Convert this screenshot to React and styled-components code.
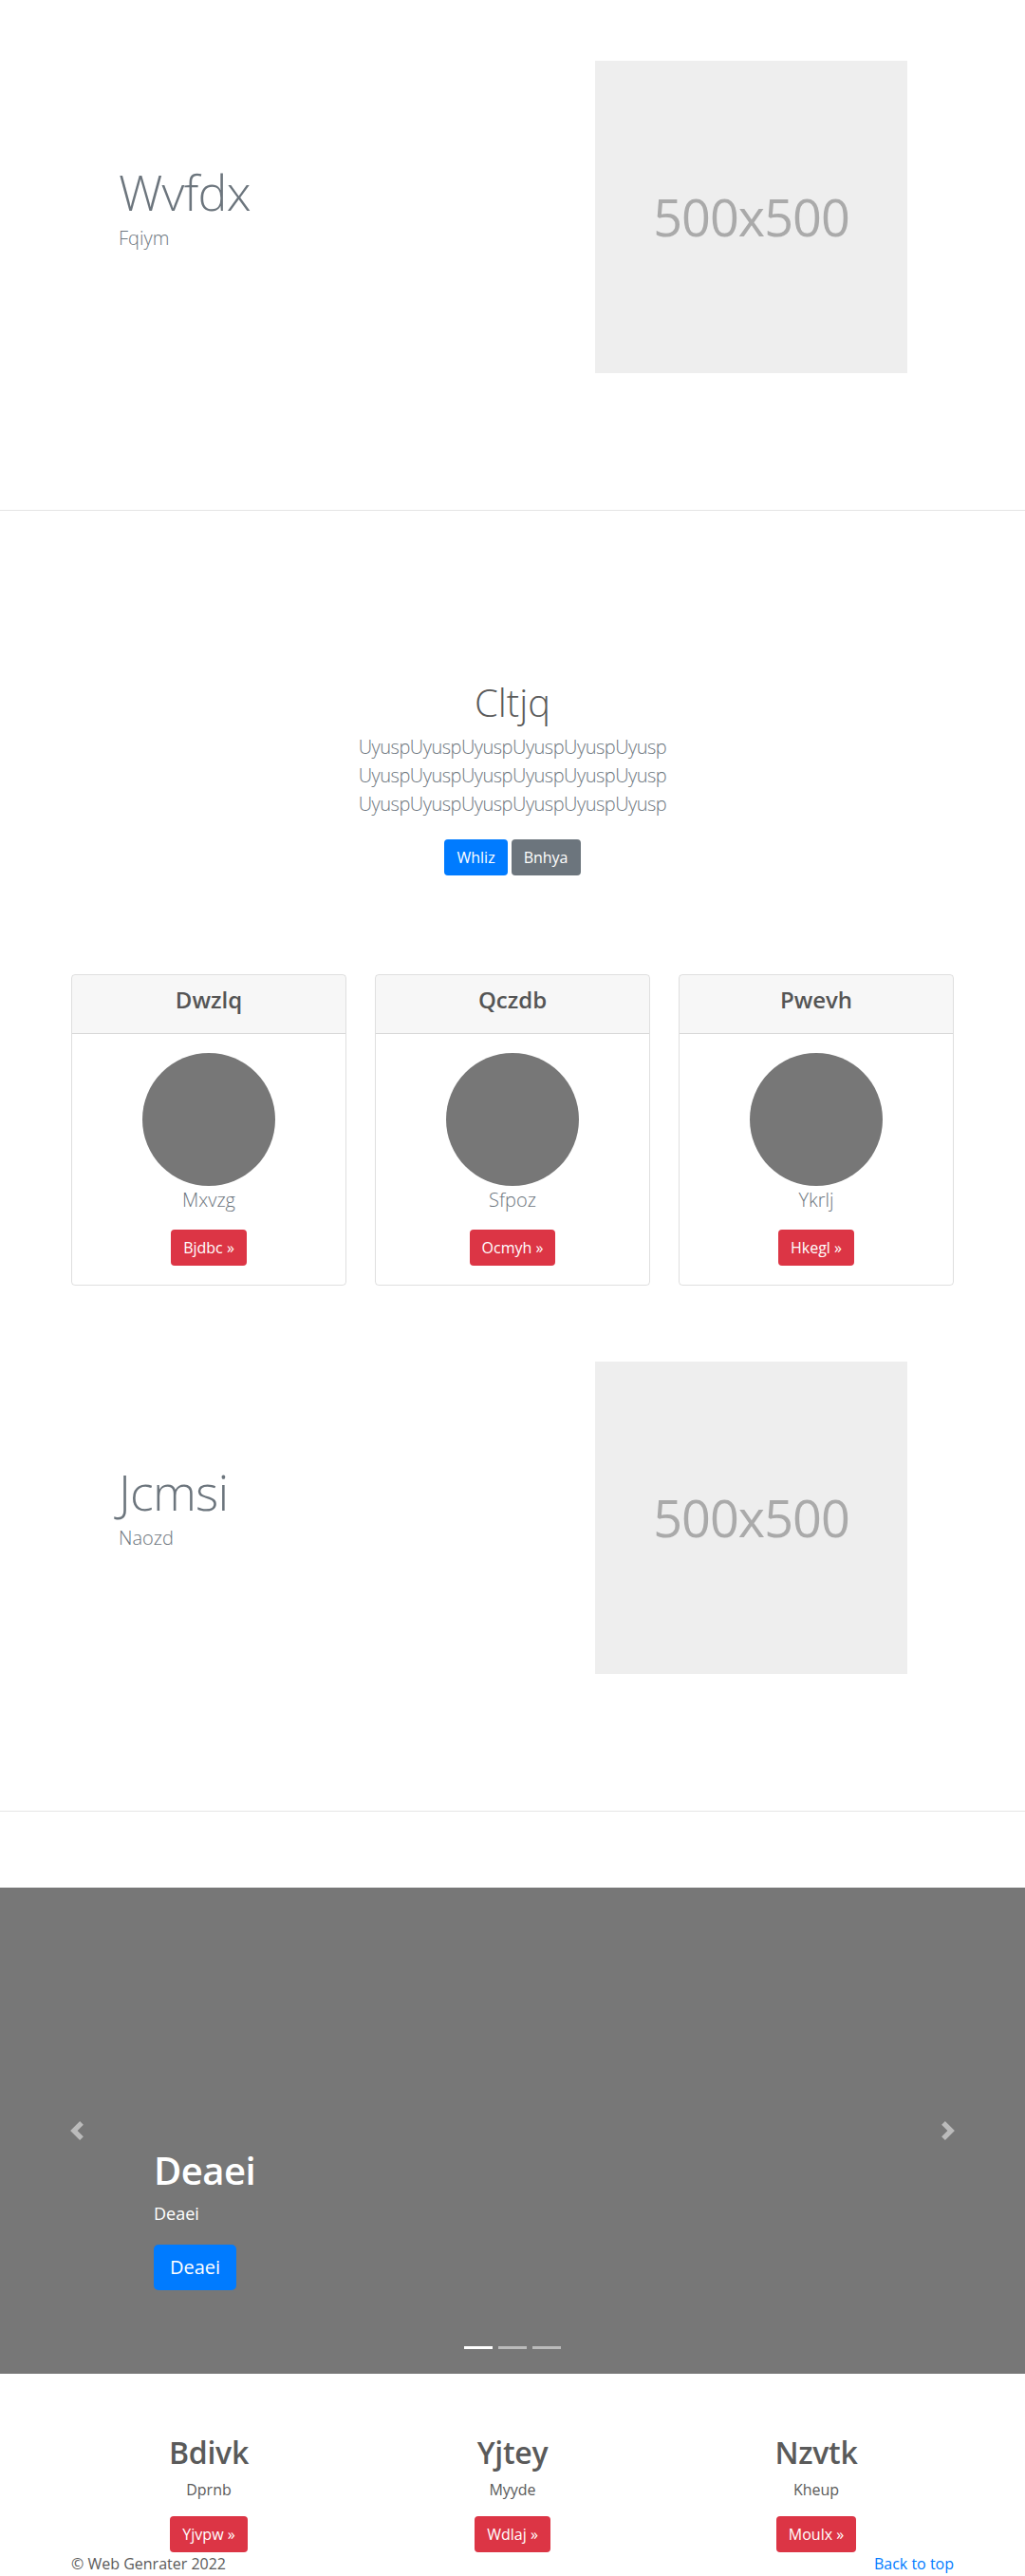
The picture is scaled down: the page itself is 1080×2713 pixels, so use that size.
import React from 'react';
import styled, { createGlobalStyle } from 'styled-components';

const GlobalStyle = createGlobalStyle`
  * { box-sizing: border-box; }
  body {
    margin: 0;
    font-family: "Open Sans", "Noto Sans", "Liberation Sans", sans-serif;
    font-size: 16px;
    line-height: 1.5;
    color: #5a5a5a;
    background: #fff;
  }
  h1, h2, h3, h4, p { margin: 0; }
`;

const colors = {
  primary: '#007bff',
  secondary: '#6c757d',
  danger: '#dc3545',
};

const Page = styled.div`
  display: flex;
  flex-direction: column;
`;

const Featurette = styled.section`
  display: grid;
  grid-template-columns: 1fr 329px;
  align-items: center;
  padding: ${(p) => p.$top}px 124px 144px 125px;
  border-bottom: 1px solid #e5e5e5;
`;

const FeatText = styled.div`
  display: flex;
  flex-direction: column;
`;

const FeatHeading = styled.h2`
  font-size: 52px;
  font-weight: 300;
  line-height: 1;
  letter-spacing: -0.8px;
  color: #6c757d;
  margin-bottom: 8px;
`;

const Lead = styled.p`
  font-size: 20px;
  font-weight: 300;
  line-height: 1.5;
  color: #6c757d;
  letter-spacing: ${(p) => (p.$tight ? '-0.5px' : 'normal')};
  margin-bottom: ${(p) => (p.$mb !== undefined ? p.$mb : 16)}px;
`;

const Placeholder = styled.div`
  width: 329px;
  height: 329px;
  background: #eee;
  color: #aaa;
  display: flex;
  align-items: center;
  justify-content: center;
  font-size: 54px;
  letter-spacing: -1px;
`;

const Intro = styled.section`
  padding-top: 178px;
  display: flex;
  flex-direction: column;
  align-items: center;
  text-align: center;
`;

const IntroTitle = styled.h1`
  font-size: 40px;
  font-weight: 300;
  line-height: 1.2;
  color: #5a5a5a;
  margin-bottom: 8px;
`;

const ButtonRow = styled.div`
  display: flex;
  justify-content: center;
  gap: 4px;
`;

const Button = styled.a`
  display: inline-block;
  padding: ${(p) => (p.$large ? '8px 16px' : '6px 12px')};
  font-size: ${(p) => (p.$large ? 20 : 16)}px;
  line-height: 1.5;
  border: 1px solid transparent;
  border-radius: ${(p) => (p.$large ? 5 : 4)}px;
  background: ${(p) => colors[p.$variant]};
  color: #fff;
  text-decoration: none;
  white-space: nowrap;
`;

const Grid3 = styled.div`
  width: 930px;
  margin: ${(p) => p.$top}px auto 0;
  display: grid;
  grid-template-columns: repeat(3, 1fr);
  gap: 30px;
  text-align: center;
`;

const Card = styled.div`
  border: 1px solid rgba(0, 0, 0, 0.125);
  border-radius: 4px;
  overflow: hidden;
  display: flex;
  flex-direction: column;
`;

const CardHeader = styled.div`
  background: rgba(0, 0, 0, 0.03);
  border-bottom: 1px solid rgba(0, 0, 0, 0.125);
  padding: 12px 20px;
`;

const CardTitle = styled.h4`
  font-size: 24px;
  font-weight: 600;
  line-height: 1.2;
  color: #555;
  margin-bottom: 8px;
`;

const CardBody = styled.div`
  padding: 20px;
  display: flex;
  flex-direction: column;
  align-items: center;
`;

const Avatar = styled.div`
  width: 140px;
  height: 140px;
  border-radius: 50%;
  background: #777;
`;

const Carousel = styled.div`
  position: relative;
  height: 512px;
  background: #777;
  margin-top: 80px;
`;

const Control = styled.button`
  position: absolute;
  top: 0;
  bottom: 0;
  ${(p) => p.$side}: 0;
  width: 15%;
  display: flex;
  align-items: center;
  justify-content: center;
  background: none;
  border: 0;
  padding: 0;
  opacity: 0.5;
  cursor: pointer;
`;

const Caption = styled.div`
  position: absolute;
  left: 162px;
  bottom: 88px;
  color: #fff;
  display: flex;
  flex-direction: column;
  align-items: flex-start;
`;

const CaptionTitle = styled.h1`
  font-size: 40px;
  font-weight: 600;
  line-height: 1.2;
  letter-spacing: -0.5px;
  margin-bottom: 8px;
`;

const CaptionText = styled.p`
  font-size: 18px;
  line-height: 1.5;
  margin-bottom: 19px;
`;

const Indicators = styled.ol`
  position: absolute;
  left: 0;
  right: 0;
  bottom: 26px;
  margin: 0;
  padding: 0;
  list-style: none;
  display: flex;
  justify-content: center;
  gap: 6px;
`;

const Indicator = styled.li`
  width: 30px;
  height: 3px;
  background: #fff;
  opacity: ${(p) => (p.$active ? 1 : 0.5)};
`;

const MarketingCol = styled.div`
  display: flex;
  flex-direction: column;
  align-items: center;
`;

const MarketingTitle = styled.h2`
  font-size: 32px;
  font-weight: 600;
  line-height: 1.2;
  letter-spacing: -0.3px;
  margin-bottom: 8px;
`;

const MarketingText = styled.p`
  margin-bottom: 16px;
`;

const Footer = styled.footer`
  width: 930px;
  margin: 0 auto;
  display: flex;
  justify-content: space-between;
  font-size: 16px;
  line-height: 1.5;
`;

const FooterLink = styled.a`
  color: #007bff;
  text-decoration: none;
`;

const PrevIcon = () => (
  <svg width="20" height="20" viewBox="0 0 8 8" fill="#fff">
    <path d="M5.25 0l-4 4 4 4 1.5-1.5L4.25 4l2.5-2.5L5.25 0z" />
  </svg>
);

const NextIcon = () => (
  <svg width="20" height="20" viewBox="0 0 8 8" fill="#fff">
    <path d="M2.75 0l-1.5 1.5L3.75 4l-2.5 2.5L2.75 8l4-4-4-4z" />
  </svg>
);

const cards = [
  { title: 'Dwzlq', text: 'Mxvzg', btn: 'Bjdbc' },
  { title: 'Qczdb', text: 'Sfpoz', btn: 'Ocmyh' },
  { title: 'Pwevh', text: 'Ykrlj', btn: 'Hkegl' },
];

const marketing = [
  { title: 'Bdivk', text: 'Dprnb', btn: 'Yjvpw' },
  { title: 'Yjtey', text: 'Myyde', btn: 'Wdlaj' },
  { title: 'Nzvtk', text: 'Kheup', btn: 'Moulx' },
];

const line = 'Uyusp'.repeat(6);

export default function App() {
  return (
    <Page>
      <GlobalStyle />
      <Featurette $top={64}>
        <FeatText>
          <FeatHeading>Wvfdx</FeatHeading>
          <Lead>Fqiym</Lead>
        </FeatText>
        <Placeholder>500x500</Placeholder>
      </Featurette>

      <Intro>
        <IntroTitle>Cltjq</IntroTitle>
        <Lead $mb={22} $tight>
          {line}
          <br />
          {line}
          <br />
          {line}
        </Lead>
        <ButtonRow>
          <Button $variant="primary" href="#">Whliz</Button>
          <Button $variant="secondary" href="#">Bnhya</Button>
        </ButtonRow>
      </Intro>

      <Grid3 $top={104}>
        {cards.map((c) => (
          <Card key={c.title}>
            <CardHeader>
              <CardTitle>{c.title}</CardTitle>
            </CardHeader>
            <CardBody>
              <Avatar />
              <Lead>{c.text}</Lead>
              <Button $variant="danger" href="#">{c.btn} »</Button>
            </CardBody>
          </Card>
        ))}
      </Grid3>

      <Featurette $top={80}>
        <FeatText>
          <FeatHeading>Jcmsi</FeatHeading>
          <Lead>Naozd</Lead>
        </FeatText>
        <Placeholder>500x500</Placeholder>
      </Featurette>

      <Carousel>
        <Caption>
          <CaptionTitle>Deaei</CaptionTitle>
          <CaptionText>Deaei</CaptionText>
          <Button $variant="primary" $large href="#">Deaei</Button>
        </Caption>
        <Control $side="left" aria-label="Previous"><PrevIcon /></Control>
        <Control $side="right" aria-label="Next"><NextIcon /></Control>
        <Indicators>
          <Indicator $active />
          <Indicator />
          <Indicator />
        </Indicators>
      </Carousel>

      <Grid3 $top={64}>
        {marketing.map((m) => (
          <MarketingCol key={m.title}>
            <MarketingTitle>{m.title}</MarketingTitle>
            <MarketingText>{m.text}</MarketingText>
            <Button $variant="danger" href="#">{m.btn} »</Button>
          </MarketingCol>
        ))}
      </Grid3>

      <Footer>
        <span>© Web Genrater 2022</span>
        <FooterLink href="#">Back to top</FooterLink>
      </Footer>
    </Page>
  );
}
